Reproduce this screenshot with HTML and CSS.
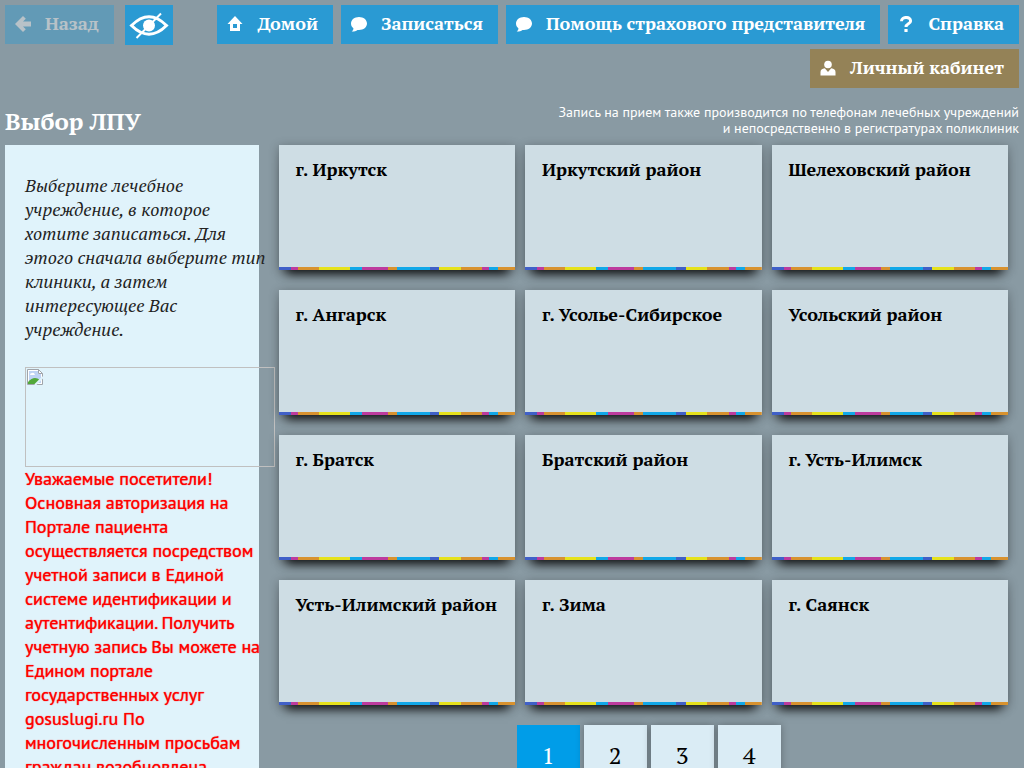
FILE: index.html
```html
<!DOCTYPE html>
<html lang="ru">
<head>
<meta charset="utf-8">
<meta name="viewport" content="width=device-width, initial-scale=1">
<title>Выбор ЛПУ</title>
<link rel="stylesheet" href="styles.css">
</head>
<body>
<header class="topbar">
  <div class="tools">
    <button class="btn" type="button" disabled>
      <svg class="icon" viewBox="0 0 16 16" aria-hidden="true"><path d="M8 0 10.800 2.700 8 5.500H16V10.500H8L10.800 13.300 8 16 0 8Z"/></svg>
      <span class="label">Назад</span>
    </button>
    <button class="btn-eye" type="button" aria-label="Версия для слабовидящих">
      <svg class="eye" viewBox="0 0 48 40" aria-hidden="true">
        <path class="eye-line" d="M6.500 20.500Q24 3 41.500 20.500Q24 38 6.500 20.500Z"/>
        <circle cx="24" cy="20.500" r="6"/>
        <path class="eye-slash" d="M11.500 33 36 8.500"/>
      </svg>
    </button>
  </div>
  <nav class="menu">
    <a class="btn" href="#">
      <svg class="icon" viewBox="0 0 16 16" aria-hidden="true"><path fill-rule="evenodd" d="M8 0 15.500 8H13V15H3V8H.5ZM6 8V12H10V8Z"/></svg>
      <span class="label">Домой</span>
    </a>
    <a class="btn" href="#">
      <svg class="icon" viewBox="0 0 16 16" aria-hidden="true"><path d="M8 1C12.500 1 16 3.800 16 7.500S12.500 14 8 14L6.500 13.900C5 15 3 15.500 .7 15.400 2 14.500 2.500 13.500 2.400 12.300 .9 11.100 0 9.400 0 7.500 0 3.800 3.500 1 8 1Z"/></svg>
      <span class="label">Записаться</span>
    </a>
    <a class="btn" href="#">
      <svg class="icon" viewBox="0 0 16 16" aria-hidden="true"><path d="M8 1C12.500 1 16 3.800 16 7.500S12.500 14 8 14L6.500 13.900C5 15 3 15.500 .7 15.400 2 14.500 2.500 13.500 2.400 12.300 .9 11.100 0 9.400 0 7.500 0 3.800 3.500 1 8 1Z"/></svg>
      <span class="label">Помощь страхового представителя</span>
    </a>
    <a class="btn" href="#">
      <svg class="icon" viewBox="0 0 16 16" aria-hidden="true"><path class="question" d="M3.500 5.200C3.500 .2 12.600.3 12.600 4.900 12.600 8 8 7.600 8 11"/><path d="M6.400 13H9.600V16H6.400Z"/></svg>
      <span class="label">Справка</span>
    </a>
    <a class="btn btn-account" href="#">
      <svg class="icon" viewBox="0 0 16 16" aria-hidden="true"><circle cx="8" cy="4.500" r="3.800"/><path d="M.5 15.500V12Q.5 9 4.800 8.300L8 12 11.200 8.300Q15.500 9 15.500 12V15.500Z"/></svg>
      <span class="label">Личный кабинет</span>
    </a>
  </nav>
</header>

<div class="heading">
  <h1>Выбор ЛПУ</h1>
  <p class="notice">Запись на прием также производится по телефонам лечебных учреждений<br>и непосредственно в регистратурах поликлиник</p>
</div>

<div class="layout">
  <aside class="sidebar">
    <p class="hint">Выберите лечебное<br>учреждение, в которое<br>хотите записаться. Для<br>этого сначала выберите тип<br>клиники, а затем<br>интересующее Вас<br>учреждение.</p>
    <div class="banner">
      <svg class="missing" viewBox="0 0 16 16" aria-hidden="true">
        <path fill="#fff" stroke="#a0a4aa" d="M.5.5H11.500L15.500 4.500V15.500H.5Z"/>
        <path fill="#bfd3f4" d="M2 2H11V5H14V14H2Z"/>
        <path fill="#fff" d="M3 6Q3 4 5 4 7 3 8 6Z"/>
        <path fill="#52a83a" d="M1 15V13Q7 6 13 11L9 15Z"/>
        <path fill="#fff" stroke="#a0a4aa" d="M11.500.5V4.500H15.500Z"/>
        <path stroke="#e0f3fb" stroke-width="2" d="M8 16 16 8"/>
      </svg>
    </div>
    <p class="alert">Уважаемые посетители!<br>Основная авторизация на<br>Портале пациента<br>осуществляется посредством<br>учетной записи в Единой<br>системе идентификации и<br>аутентификации. Получить<br>учетную запись Вы можете на<br>Едином портале<br>государственных услуг<br>gosuslugi.ru По<br>многочисленным просьбам<br>граждан возобновлена</p>
  </aside>

  <main class="content">
    <div class="grid">
      <a class="card" href="#">г. Иркутск</a>
      <a class="card" href="#">Иркутский район</a>
      <a class="card" href="#">Шелеховский район</a>
      <a class="card" href="#">г. Ангарск</a>
      <a class="card" href="#">г. Усолье-Сибирское</a>
      <a class="card" href="#">Усольский район</a>
      <a class="card" href="#">г. Братск</a>
      <a class="card" href="#">Братский район</a>
      <a class="card" href="#">г. Усть-Илимск</a>
      <a class="card" href="#">Усть-Илимский район</a>
      <a class="card" href="#">г. Зима</a>
      <a class="card" href="#">г. Саянск</a>
    </div>
    <nav class="pager" aria-label="Страницы">
      <a class="page page-current" href="#" aria-current="page">1</a>
      <a class="page" href="#">2</a>
      <a class="page" href="#">3</a>
      <a class="page" href="#">4</a>
    </nav>
  </main>
</div>
</body>
</html>
```
FILE: styles.css
```css
* { box-sizing: border-box; }

html { scrollbar-width: none; }

body {
  margin: 0;
  padding: 5px 5px 0;
  background: #899aa3;
  font-family: "PT Serif", "Liberation Serif", serif;
  color: #000;
}

h1, p { margin: 0; }
a { text-decoration: none; }

.topbar {
  display: flex;
  align-items: flex-start;
  justify-content: space-between;
}

.tools { display: flex; gap: 11px; flex: none; }

.menu {
  display: flex;
  flex-wrap: wrap;
  justify-content: flex-end;
  gap: 5px 8px;
}

.btn {
  display: flex;
  align-items: center;
  gap: 14px;
  height: 39px;
  padding: 0 15px 2px 10px;
  border: 0;
  background: #2a9ad3;
  color: #fff;
  font: bold 18px/24px "PT Serif", "Liberation Serif", serif;
  white-space: nowrap;
}

.btn:disabled { opacity: 0.4; }
.btn-account { background: #948257; }
.label { padding-bottom: 2px; }

.icon { width: 16px; height: 16px; flex: none; fill: currentColor; }
.question { fill: none; stroke: currentColor; stroke-width: 3; }

.btn-eye {
  width: 48px;
  height: 40px;
  padding: 0;
  border: 0;
  background: #2a9ad3;
}

.eye { display: block; width: 48px; height: 40px; fill: #fff; }
.eye-line { fill: none; stroke: #fff; stroke-width: 3; }
.eye-slash { stroke: #fff; stroke-width: 2; }

.heading {
  display: flex;
  justify-content: space-between;
  padding: 16px 0 7px;
  color: #fff;
}

.heading h1 { font-size: 24px; line-height: 34px; }

.notice {
  font: 14px/16px "PT Sans", "Noto Sans", sans-serif;
  text-align: right;
}

.layout {
  display: grid;
  grid-template-columns: minmax(0, 1fr) minmax(0, 3fr);
}

.sidebar {
  padding: 28px 20px;
  background: #e0f3fb;
  white-space: nowrap;
}

.hint {
  margin-bottom: 26px;
  color: #222;
  font-size: 18px;
  font-style: italic;
  line-height: 24px;
}

.banner {
  width: 250px;
  height: 100px;
  padding: 1px;
  border: 1px solid #c0c0c0;
}

.missing { display: block; width: 16px; height: 16px; }

.alert {
  color: #f00;
  font: 18px/24px "PT Sans", Roboto, sans-serif;
  text-shadow: 0 0 1px #f00;
}

.content { padding-left: 20px; }

.grid {
  display: grid;
  grid-template-columns: repeat(3, minmax(0, 1fr));
  gap: 20px 10px;
  padding-right: 11px;
}

.card {
  min-height: 125px;
  padding: 12px 16px 12px 17px;
  background:
    linear-gradient(90deg,
      #4060c8 0 5%, #bd3b9e 0 8%, #d8922f 0 17%, #e6e21c 0 30%,
      #12a8e8 0 35%, #bd3b9e 0 46%, #d8922f 0 50%, #12a8e8 0 64%,
      #4060c8 0 68%, #e6e21c 0 77%, #d8922f 0 86%, #bd3b9e 0 89%,
      #12a8e8 0 93%, #d8922f 0) bottom / 100% 3px no-repeat,
    #cedde4;
  box-shadow: 0 11px 10px -7px rgba(0, 0, 0, 0.85), 0 2px 10px rgba(0, 0, 0, 0.3);
  color: #000;
  font-size: 18px;
  font-weight: bold;
  line-height: 24px;
}

.pager {
  display: flex;
  justify-content: center;
  gap: 4px;
  padding-top: 20px;
}

.page {
  width: 63px;
  height: 63px;
  background: #daecf5;
  box-shadow: 0 0 8px rgba(0, 0, 0, 0.3);
  color: #000;
  font-size: 24px;
  line-height: 60px;
  text-align: center;
}

.page-current { background: #009de8; box-shadow: none; color: #fff; }
```
